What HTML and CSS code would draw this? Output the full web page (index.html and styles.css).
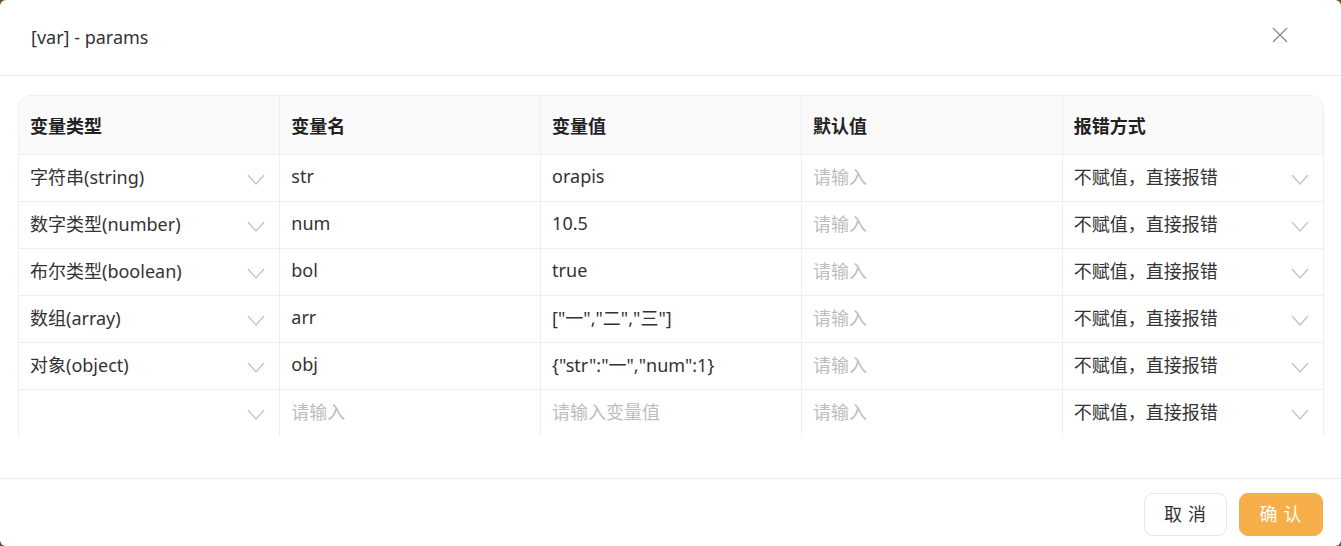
FILE: index.html
```html
<!DOCTYPE html>
<html lang="zh">
<head>
<meta charset="utf-8">
<link rel="stylesheet" href="styles.css">
</head>
<body>
<div class="modal">
  <div class="modal-header">
    <div class="title">[var] - params</div>
    <svg class="close" width="16" height="16" viewBox="0 0 16 16"><path d="M1 1L15 15M15 1L1 15" stroke="#8c8c8c" stroke-width="1.4" fill="none"/></svg>
  </div>
  <div class="modal-body">
    <div class="table-wrap">
      <table class="grid">
        <thead>
          <tr><th>变量类型</th><th>变量名</th><th>变量值</th><th>默认值</th><th>报错方式</th></tr>
        </thead>
        <tbody>
          <tr>
            <td><div class="sel"><span>字符串(string)</span><svg class="chev" width="18" height="11" viewBox="0 0 18 11"><path d="M1 1L9 10L17 1" stroke="#c4c4c4" stroke-width="1.3" fill="none"/></svg></div></td>
            <td>str</td><td>orapis</td><td class="ph">请输入</td>
            <td><div class="sel"><span>不赋值，直接报错</span><svg class="chev" width="18" height="11" viewBox="0 0 18 11"><path d="M1 1L9 10L17 1" stroke="#c4c4c4" stroke-width="1.3" fill="none"/></svg></div></td>
          </tr>
          <tr>
            <td><div class="sel"><span>数字类型(number)</span><svg class="chev" width="18" height="11" viewBox="0 0 18 11"><path d="M1 1L9 10L17 1" stroke="#c4c4c4" stroke-width="1.3" fill="none"/></svg></div></td>
            <td>num</td><td>10.5</td><td class="ph">请输入</td>
            <td><div class="sel"><span>不赋值，直接报错</span><svg class="chev" width="18" height="11" viewBox="0 0 18 11"><path d="M1 1L9 10L17 1" stroke="#c4c4c4" stroke-width="1.3" fill="none"/></svg></div></td>
          </tr>
          <tr>
            <td><div class="sel"><span>布尔类型(boolean)</span><svg class="chev" width="18" height="11" viewBox="0 0 18 11"><path d="M1 1L9 10L17 1" stroke="#c4c4c4" stroke-width="1.3" fill="none"/></svg></div></td>
            <td>bol</td><td>true</td><td class="ph">请输入</td>
            <td><div class="sel"><span>不赋值，直接报错</span><svg class="chev" width="18" height="11" viewBox="0 0 18 11"><path d="M1 1L9 10L17 1" stroke="#c4c4c4" stroke-width="1.3" fill="none"/></svg></div></td>
          </tr>
          <tr>
            <td><div class="sel"><span>数组(array)</span><svg class="chev" width="18" height="11" viewBox="0 0 18 11"><path d="M1 1L9 10L17 1" stroke="#c4c4c4" stroke-width="1.3" fill="none"/></svg></div></td>
            <td>arr</td><td>["一","二","三"]</td><td class="ph">请输入</td>
            <td><div class="sel"><span>不赋值，直接报错</span><svg class="chev" width="18" height="11" viewBox="0 0 18 11"><path d="M1 1L9 10L17 1" stroke="#c4c4c4" stroke-width="1.3" fill="none"/></svg></div></td>
          </tr>
          <tr>
            <td><div class="sel"><span>对象(object)</span><svg class="chev" width="18" height="11" viewBox="0 0 18 11"><path d="M1 1L9 10L17 1" stroke="#c4c4c4" stroke-width="1.3" fill="none"/></svg></div></td>
            <td>obj</td><td>{"str":"一","num":1}</td><td class="ph">请输入</td>
            <td><div class="sel"><span>不赋值，直接报错</span><svg class="chev" width="18" height="11" viewBox="0 0 18 11"><path d="M1 1L9 10L17 1" stroke="#c4c4c4" stroke-width="1.3" fill="none"/></svg></div></td>
          </tr>
          <tr>
            <td><div class="sel"><span></span><svg class="chev" width="18" height="11" viewBox="0 0 18 11"><path d="M1 1L9 10L17 1" stroke="#c4c4c4" stroke-width="1.3" fill="none"/></svg></div></td>
            <td class="ph">请输入</td><td class="ph">请输入变量值</td><td class="ph">请输入</td>
            <td><div class="sel"><span>不赋值，直接报错</span><svg class="chev" width="18" height="11" viewBox="0 0 18 11"><path d="M1 1L9 10L17 1" stroke="#c4c4c4" stroke-width="1.3" fill="none"/></svg></div></td>
          </tr>
        </tbody>
      </table>
    </div>
  </div>
  <div class="modal-footer">
    <button class="btn btn-default">取 消</button>
    <button class="btn btn-primary">确 认</button>
  </div>
</div>
</body>
</html>
```

FILE: styles.css
```css
html, body {
  margin: 0;
  padding: 0;
  background: #6e5226;
}
body {
  font-family: "Noto Sans", "Noto Sans CJK SC", sans-serif;
  color: #333;
}
.modal {
  width: 1341px;
  height: 546px;
  background: #fff;
  border-radius: 6px;
  display: flex;
  flex-direction: column;
  overflow: hidden;
}
.modal-header {
  height: 76px;
  box-sizing: border-box;
  border-bottom: 1px solid #ececec;
  display: flex;
  align-items: center;
  justify-content: space-between;
  padding: 0 53px 2px 31px;
}
.title {
  font-size: 18px;
  color: #333;
}
.close {
  display: block;
  margin-bottom: 4px;
}
.modal-body {
  padding: 19px 17px 42px 18px;
}
.table-wrap {
  height: 341px;
  overflow: hidden;
  border: 1px solid #efefef;
  border-bottom: none;
  border-radius: 14px 14px 0 0;
  box-sizing: border-box;
}
.grid {
  width: 100%;
  border-collapse: collapse;
  table-layout: fixed;
  font-size: 18px;
}
.grid th {
  background: #fafafa;
  height: 58px;
  text-align: left;
  font-weight: 700;
  color: #222;
  padding: 0 11px;
  border-right: 1px solid #efefef;
  border-bottom: 1px solid #efefef;
}
.grid td {
  height: 42px;
  padding: 0 11px 4px;
  border-right: 1px solid #efefef;
  border-bottom: 1px solid #efefef;
  color: #333;
  white-space: nowrap;
}
.grid th:last-child, .grid td:last-child {
  border-right: none;
}
.grid td.ph {
  color: #bdbdbd;
}
.sel {
  display: flex;
  align-items: center;
  justify-content: space-between;
  padding-right: 3px;
}
.chev {
  display: block;
  margin-top: 7px;
}
.modal-footer {
  border-top: 1px solid #ececec;
  flex: 1;
  display: flex;
  justify-content: flex-end;
  align-items: flex-start;
  gap: 12px;
  padding: 14px 18px 0 0;
}
.btn {
  height: 43px;
  padding: 0 0 4px;
  border-radius: 9px;
  font-family: "Noto Sans CJK SC", sans-serif;
  font-size: 18px;
  letter-spacing: 1px;
  cursor: pointer;
}
.btn-default {
  width: 83px;
  background: #fff;
  border: 1px solid #e6e6e6;
  color: #333;
}
.btn-primary {
  width: 84px;
  background: #f5ae48;
  border: 1px solid #f5ae48;
  color: #fff;
}
```
